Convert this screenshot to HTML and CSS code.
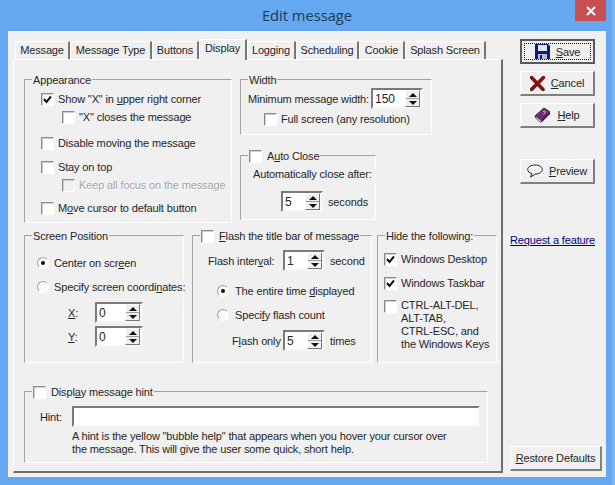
FILE: index.html
```html
<!DOCTYPE html>
<html lang="en">
<head>
<meta charset="utf-8">
<title>Edit message</title>
<link rel="stylesheet" href="styles.css">
</head>
<body>
<div class="window">
  <header class="titlebar">
    <span class="title">Edit message</span>
    <span class="close"><svg width="10" height="10" viewBox="0 0 10 10"><path d="M1 1 9 9M9 1 1 9" stroke="#fff" stroke-width="2"/></svg></span>
  </header>
  <div class="client">
    <main class="main">
      <nav class="tabs">
        <span class="tab">Message</span>
        <span class="tab">Message Type</span>
        <span class="tab">Buttons</span>
        <span class="tab active">Display</span>
        <span class="tab">Logging</span>
        <span class="tab">Scheduling</span>
        <span class="tab">Cookie</span>
        <span class="tab">Splash Screen</span>
      </nav>
      <section class="panel">
        <div class="top-row">
          <div class="group appearance">
            <div class="legend">Appearance</div>
            <label class="row"><span class="check"><svg class="tick" width="11" height="11" viewBox="0 0 11 11"><path d="M2 5 4.500 8 9 2.500" fill="none" stroke="#111" stroke-width="2"/></svg></span><span>Show "X" in <u>u</u>pper right corner</span></label>
            <label class="row sub gap2"><span class="check"></span><span>"X" closes the message</span></label>
            <label class="row gap10"><span class="check"></span><span>Disable moving the message</span></label>
            <label class="row gap8"><span class="check"></span><span>Stay on top</span></label>
            <label class="row sub gap2 disabled"><span class="check"></span><span>Keep all focus on the message</span></label>
            <label class="row gap7"><span class="check"></span><span>M<u>o</u>ve cursor to default button</span></label>
          </div>
          <div class="right-col">
            <div class="group width">
              <div class="legend">Width</div>
              <div class="row tall"><span class="min-label">Minimum message width:</span><span class="spin w52"><span class="val">150</span><span class="arrows"><i class="up"></i><i class="down"></i></span></span></div>
              <label class="row sub-width gap2"><span class="check"></span><span>Full screen (any resolution)</span></label>
            </div>
            <div class="group autoclose">
              <div class="legend"><span class="check"></span><span>A<u>u</u>to Close</span></div>
              <div class="row">Automatically close after:</div>
              <div class="row tall seconds-row"><span class="spin w42"><span class="val">5</span><span class="arrows"><i class="up"></i><i class="down"></i></span></span><span class="unit">seconds</span></div>
            </div>
          </div>
        </div>
        <div class="mid-row">
          <div class="group position">
            <div class="legend">Screen Position</div>
            <label class="row"><span class="radio on"></span><span>Center on scr<u>e</u>en</span></label>
            <label class="row gap8"><span class="radio"></span><span>Specify screen coordi<u>n</u>ates:</span></label>
            <div class="row tall coord gap7"><span class="coord-label"><u>X</u>:</span><span class="spin w48"><span class="val">0</span><span class="arrows"><i class="up"></i><i class="down"></i></span></span></div>
            <div class="row tall coord gap3"><span class="coord-label"><u>Y</u>:</span><span class="spin w48"><span class="val">0</span><span class="arrows"><i class="up"></i><i class="down"></i></span></span></div>
          </div>
          <div class="group flash">
            <div class="legend"><span class="check"></span><span><u>F</u>lash the title bar of message</span></div>
            <div class="row tall"><span class="interval-label">Flash inter<u>v</u>al:</span><span class="spin w42"><span class="val">1</span><span class="arrows"><i class="up"></i><i class="down"></i></span></span><span class="unit">second</span></div>
            <label class="row flash-opt gap12"><span class="radio on"></span><span>The entire time <u>d</u>isplayed</span></label>
            <label class="row flash-opt gap8"><span class="radio"></span><span>Speci<u>f</u>y flash count</span></label>
            <div class="row tall flash-only gap7"><span class="only-label">F<u>l</u>ash only</span><span class="spin w42"><span class="val">5</span><span class="arrows"><i class="up"></i><i class="down"></i></span></span><span class="unit">times</span></div>
          </div>
          <div class="group hide">
            <div class="legend">Hide the following:</div>
            <label class="row"><span class="check"><svg class="tick" width="11" height="11" viewBox="0 0 11 11"><path d="M2 5 4.500 8 9 2.500" fill="none" stroke="#111" stroke-width="2"/></svg></span><span>Windows Desktop</span></label>
            <label class="row gap8"><span class="check"><svg class="tick" width="11" height="11" viewBox="0 0 11 11"><path d="M2 5 4.500 8 9 2.500" fill="none" stroke="#111" stroke-width="2"/></svg></span><span>Windows Taskbar</span></label>
            <label class="row multi gap8"><span class="check"></span><span>CTRL-ALT-DEL,<br>ALT-TAB,<br>CTRL-ESC, and<br>the Windows Keys</span></label>
          </div>
        </div>
        <div class="group hint">
          <div class="legend"><span class="check"></span><span>Displ<u>a</u>y message hint</span></div>
          <div class="row tall"><span class="hint-label">Hint:</span><span class="hint-input"></span></div>
          <p class="hint-text">A hint is the yellow "bubble help" that appears when you hover your cursor over<br>the message. This will give the user some quick, short help.</p>
        </div>
      </section>
    </main>
    <aside class="side">
      <button class="btn default"><span class="focus">
        <svg width="15" height="15" viewBox="0 0 15 15"><path d="M0 0H13L15 2V15H0Z" fill="#0c1c7c"/><rect x="3" y="1" width="9" height="6" fill="#dfe6f4"/><rect x="3" y="10" width="9" height="5" fill="#b8bccc"/><rect x="5" y="11" width="2" height="4" fill="#0c1c7c"/></svg>
        <span><u>S</u>ave</span></span></button>
      <button class="btn">
        <svg width="15" height="15" viewBox="0 0 15 15"><path d="M1.500 1.500 13 13.500M13.500 1.500 1.500 13.500" stroke="#7d1414" stroke-width="3.600" stroke-linecap="round"/></svg>
        <span><u>C</u>ancel</span></button>
      <button class="btn">
        <svg width="17" height="16" viewBox="0 0 17 16"><path d="M1 9 10 1 16 5 7 14Z" fill="#6b2c7f" stroke="#3a1848"/><path d="M1 9 1.500 11 7 15.500 8 14 2.500 10Z" fill="#e8e0d8" stroke="#3a1848" stroke-width=".7"/><path d="M7 14 16 5 16 7 8 15Z" fill="#3a1848"/><path d="M9 4.500 11 4 11 6 9.500 7" fill="none" stroke="#e8c030"/></svg>
        <span><u>H</u>elp</span></button>
      <button class="btn preview">
        <svg width="16" height="14" viewBox="0 0 16 14"><path d="M8 1C4 1 .7 3 .7 5.500 .7 7.500 2.500 9 5 9.600L3.500 13 8.500 10C12.500 10 15.300 8 15.300 5.500 15.300 3 12 1 8 1Z" fill="#fff" fill-opacity=".35" stroke="#222"/></svg>
        <span><u>P</u>review</span></button>
      <a class="link" href="#">Request a feature</a>
      <button class="btn restore"><span><u>R</u>estore Defaults</span></button>
    </aside>
  </div>
</div>
</body>
</html>
```
FILE: styles.css
```css
* { box-sizing: border-box; }
html, body { margin: 0; padding: 0; }
body {
  width: 615px;
  height: 485px;
  overflow: hidden;
  font: 11px/14px "Liberation Sans", Arial, sans-serif;
  letter-spacing: -0.14px;
  color: #262626;
}
u { text-underline-offset: 1px; }
.window {
  width: 615px;
  height: 485px;
  background: #66a8ef;
  border-right: 3px solid #7db6f0;
  display: flex;
  flex-direction: column;
}
.titlebar {
  height: 31px;
  flex: none;
  display: flex;
  justify-content: center;
  position: relative;
}
.title {
  font: 14.700px/31px "Open Sans", "Noto Sans", sans-serif;
  letter-spacing: 0;
  color: #1d3a55;
  margin-left: 2px;
}
.close {
  position: absolute;
  left: 575px;
  top: 0;
  width: 31px;
  height: 21px;
  background: #c75050;
  display: flex;
  align-items: center;
  justify-content: center;
}
.client {
  margin: 0 6px 8px 8px;
  flex: 1;
  background: #f0f0f0;
  padding: 8px 4px 4px 5px;
  display: flex;
  gap: 7px;
  min-height: 0;
}
.main {
  width: 490px;
  flex: none;
  display: flex;
  flex-direction: column;
}
.tabs {
  display: flex;
  height: 20px;
  padding-left: 2px;
  flex: none;
  position: relative;
  z-index: 1;
}
.tab {
  margin-top: 2px;
  height: 18px;
  border-top: 1px solid #fff;
  border-left: 1px solid #fff;
  border-right: 2px solid #777;
  text-align: center;
  line-height: 17px;
  white-space: nowrap;
}
.tab:nth-child(1) { width: 55px; }
.tab:nth-child(2) { width: 82px; }
.tab:nth-child(3) { width: 47px; }
.tab:nth-child(4) { width: 48px; }
.tab:nth-child(5) { width: 49px; }
.tab:nth-child(6) { width: 63px; }
.tab:nth-child(7) { width: 46px; }
.tab:nth-child(8) { width: 81px; }
.tab.active {
  margin-top: 0;
  height: 21px;
  background: #f0f0f0;
  line-height: 16px;
}
.panel {
  flex: 1;
  border-top: 1px solid #fff;
  border-left: 1px solid #fff;
  border-right: 2px solid #6e6e6e;
  border-bottom: 2px solid #6e6e6e;
  padding: 19px 0 0 10px;
}
.top-row {
  display: flex;
  gap: 8px;
}
.right-col {
  display: flex;
  flex-direction: column;
  align-items: flex-start;
  gap: 20px;
}
.mid-row {
  display: flex;
  margin-top: 12px;
}
.group {
  position: relative;
  border: 1px solid #fff;
  border-top-color: #a2a2a2;
  border-left-color: #a2a2a2;
}
.legend {
  position: absolute;
  top: -8px;
  left: 7px;
  height: 16px;
  background: #f0f0f0;
  padding: 0 1px;
  display: flex;
  align-items: center;
  gap: 5px;
  white-space: nowrap;
}
.row {
  display: flex;
  align-items: center;
  gap: 4px;
  height: 16px;
  white-space: nowrap;
}
.tall { height: 21px; }
.gap2 { margin-top: 2px; }
.gap3 { margin-top: 3px; }
.gap7 { margin-top: 7px; }
.gap8 { margin-top: 8px; }
.gap10 { margin-top: 10px; }
.gap12 { margin-top: 12px; }
.check {
  width: 13px;
  height: 13px;
  flex: none;
  background: #fff;
  border: 1px solid #fff;
  border-top-color: #8a8a8a;
  border-left-color: #8a8a8a;
  box-shadow: inset 1px 1px 0 #cfcfcf;
  display: block;
  position: relative;
}
.tick { display: block; }
.disabled { color: #a4a4a4; text-shadow: 1px 1px 0 #fff; }
.disabled .check { background: #f0f0f0; }
.radio {
  width: 12px;
  height: 12px;
  flex: none;
  margin-right: 1px;
  border-radius: 50%;
  background: #fafafa;
  border: 1px solid #fff;
  border-top-color: #a0a0a0;
  border-left-color: #a0a0a0;
  display: flex;
  align-items: center;
  justify-content: center;
}
.radio.on::after {
  content: "";
  width: 4px;
  height: 4px;
  border-radius: 50%;
  background: #111;
}
.spin {
  height: 21px;
  flex: none;
  display: flex;
  align-items: center;
  justify-content: space-between;
  background: #fff;
  border: 2px solid #f4f4f4;
  border-top-color: #7a7a7a;
  border-left-color: #7a7a7a;
  padding: 0 1px 0 2px;
}
.w42 { width: 42px; }
.w48 { width: 48px; }
.w52 { width: 52px; }
.val { font-size: 12px; letter-spacing: 0; }
.arrows {
  width: 15px;
  height: 17px;
  display: flex;
  flex-direction: column;
  background: #efefef;
  border: 1px solid #fff;
  border-right-color: #777;
  border-bottom-color: #777;
}
.arrows i {
  flex: 1;
  display: flex;
  align-items: center;
  justify-content: center;
}
.arrows i::after {
  content: "";
  border-left: 4px solid transparent;
  border-right: 4px solid transparent;
}
.arrows .up::after { border-bottom: 4px solid #111; }
.arrows .down { border-top: 1px solid #9a9a9a; }
.arrows .down::after { border-top: 4px solid #111; }
.unit { margin-left: 1px; }

.appearance {
  width: 208px;
  height: 144px;
  padding: 11px 0 0 16px;
}
.sub { margin-left: 21px; }
.width {
  width: 192px;
  height: 56px;
  padding: 8px 0 0 7px;
}
.min-label { width: 119px; flex: none; }
.sub-width { margin-left: 16px; }
.autoclose {
  width: 136px;
  height: 65px;
  padding: 10px 0 0 12px;
}
.seconds-row { margin: 9px 0 0 28px; }
.position {
  width: 160px;
  height: 128px;
  padding: 19px 0 0 12px;
  margin-right: 8px;
}
.coord { margin-left: 31px; gap: 0; }
.coord-label { width: 27px; }
.flash {
  width: 180px;
  height: 128px;
  padding: 14px 0 0 15px;
  margin-right: 5px;
}
.interval-label { width: 75px; flex: none; margin-right: -4px; }
.flash-opt { margin-left: 9px; gap: 5px; }
.flash-only { margin-left: 24px; }
.only-label { width: 51px; flex: none; margin-right: -4px; }
.hide {
  width: 120px;
  height: 128px;
  padding: 15px 0 0 6px;
}
.multi {
  height: auto;
  align-items: flex-start;
  line-height: 13px;
}
.multi .check { margin-top: 1px; }
.hint {
  width: 464px;
  height: 72px;
  margin-top: 28px;
  padding: 14px 0 0 15px;
}
.hint-label { width: 28px; flex: none; }
.hint-input {
  width: 408px;
  height: 21px;
  background: #fff;
  border: 2px solid #f4f4f4;
  border-top-color: #7a7a7a;
  border-left-color: #7a7a7a;
}
.hint-text {
  margin: 3px 0 0 32px;
  line-height: 13px;
  white-space: nowrap;
}
.side {
  width: 92px;
  flex: none;
  display: flex;
  flex-direction: column;
  align-items: flex-end;
  padding-bottom: 2px;
}
.btn {
  width: 75px;
  height: 25px;
  margin-right: 7px;
  margin-bottom: 7px;
  padding: 0;
  font: inherit;
  letter-spacing: inherit;
  color: inherit;
  background: #f0f0f0;
  border: 1px solid #fff;
  border-right: 2px solid #808080;
  border-bottom: 2px solid #808080;
  display: flex;
  align-items: center;
  justify-content: center;
  gap: 6px;
  white-space: nowrap;
}
.btn.default {
  border: 2px solid #5a5a5a;
  padding: 2px;
}
.focus {
  flex: 1;
  align-self: stretch;
  border: 1px dotted #111;
  display: flex;
  align-items: center;
  justify-content: center;
  gap: 6px;
}
.preview { margin-top: 24px; }
.link {
  margin-top: 42px;
  width: 92px;
  color: #000080;
  white-space: nowrap;
}
.restore {
  width: 92px;
  margin: auto 0 0;
}
```
